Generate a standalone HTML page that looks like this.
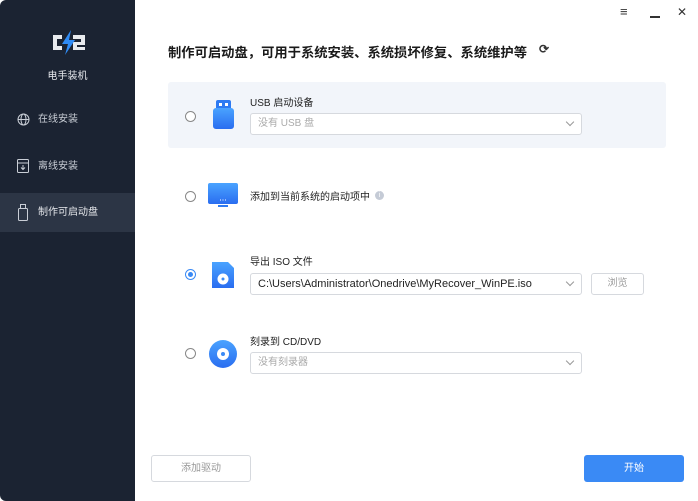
<!DOCTYPE html><html><head><meta charset="utf-8"><style>
*{margin:0;padding:0;box-sizing:border-box}
body{width:698px;height:501px;background:#fff;font-family:"Liberation Sans","Noto Sans CJK SC",sans-serif;position:relative;overflow:hidden;font-size:10px;color:#333}
.a{position:absolute}
.side{left:0;top:0;width:135px;height:501px;background:#1b2332;border-radius:6px 0 0 6px}
.nav{left:0;width:135px;height:39px;color:#c9ced6;font-size:10px;line-height:39px;padding-left:38px}
.radio{width:11px;height:11px;border:1px solid #888;border-radius:50%;background:#fff}
.sel{width:332px;height:22px;border:1px solid #d6d9de;border-radius:3px;background:#fff;padding-left:7px;line-height:20px;color:#aaa;font-size:10px}
.sel:after{content:"";position:absolute;right:8px;top:5px;width:5px;height:5px;border-right:1px solid #999;border-bottom:1px solid #999;transform:rotate(45deg)}
.lbl{font-size:10px;color:#222}
</style></head><body>
<div class="a side"></div>
<svg class="a" style="left:51px;top:30px" width="36" height="25" viewBox="0 0 36 25"><path d="M2 5h9v4H6v7h5v4H2z M22 5h12v10H26v2h8v3H22v-8h8V9h-8z" fill="#e8eaee"/><path d="M20 0L11 14h6l-3 11 10-15h-6z" fill="#2f8bf5"/></svg>
<div class="a" style="left:0;width:135px;top:67px;text-align:center;color:#e6e8ec;font-size:10px">电手装机</div>
<div class="a nav" style="top:100px">在线安装</div>
<svg class="a" style="left:17px;top:113px" width="13" height="13" viewBox="0 0 13 13" fill="none" stroke="#c9ced6"><circle cx="6.5" cy="6.5" r="5.5"/><ellipse cx="6.5" cy="6.5" rx="2.5" ry="5.5"/><path d="M1 6.5h11"/></svg>
<div class="a nav" style="top:147px">离线安装</div>
<svg class="a" style="left:17px;top:159px" width="12" height="14" viewBox="0 0 12 14" fill="none" stroke="#c9ced6"><rect x=".5" y=".5" width="11" height="13" rx="1"/><path d="M.5 4h11M6 6v4M4 8.5l2 2 2-2"/></svg>
<div class="a nav" style="top:193px;background:#2c3545;color:#e6e8ec">制作可启动盘</div>
<svg class="a" style="left:18px;top:204px" width="10" height="17" viewBox="0 0 10 17" fill="none" stroke="#c9ced6"><rect x="2.5" y=".5" width="5" height="4"/><rect x=".5" y="4.5" width="9" height="12" rx="1"/></svg>
<div class="a" style="left:620px;top:4px;font-size:13px;color:#333">≡</div>
<div class="a" style="left:650px;top:16px;width:10px;height:1.5px;background:#333"></div>
<div class="a" style="left:677px;top:5px;font-size:12px;color:#333">✕</div>
<div class="a" style="left:168px;top:42px;font-size:13.3px;font-weight:bold;color:#1a1a1a;white-space:nowrap">制作可启动盘，可用于系统安装、系统损坏修复、系统维护等</div>
<div class="a" style="left:539px;top:42px;font-size:12px;font-weight:bold">⟳</div>
<div class="a" style="left:168px;top:82px;width:498px;height:66px;background:#f2f5fa;border-radius:3px"></div>
<div class="a radio" style="left:185px;top:111px"></div>
<svg class="a" style="left:211px;top:100px" width="25" height="30" viewBox="0 0 25 30"><defs><linearGradient id="g" x1="0" y1="0" x2="0" y2="1"><stop offset="0" stop-color="#4aa3ff"/><stop offset="1" stop-color="#2a6df0"/></linearGradient></defs><rect x="5" y="0" width="15" height="10" rx="2" fill="#2e7af2"/><rect x="8" y="3" width="3" height="3" fill="#fff"/><rect x="14" y="3" width="3" height="3" fill="#fff"/><rect x="2" y="8" width="21" height="21" rx="3" fill="url(#g)"/></svg>
<div class="a lbl" style="left:250px;top:94px">USB 启动设备</div>
<div class="a sel" style="left:250px;top:113px">没有 USB 盘</div>
<div class="a radio" style="left:185px;top:191px"></div>
<svg class="a" style="left:208px;top:183px" width="30" height="26" viewBox="0 0 30 26"><rect x="0" y="0" width="30" height="21" rx="2" fill="url(#g)"/><rect x="10" y="22" width="10" height="2" fill="#2e7af2"/><path d="M12 17h1M14.5 17h1M17 17h1" stroke="#fff"/></svg>
<div class="a lbl" style="left:250px;top:188px">添加到当前系统的启动项中</div>
<div class="a" style="left:375px;top:191px;width:9px;height:9px;border-radius:50%;background:#c5cbd6;color:#fff;font-size:7px;text-align:center;line-height:9px">i</div>
<div class="a radio" style="left:185px;top:269px;border-color:#3a8af5"></div>
<div class="a" style="left:188px;top:272px;width:5px;height:5px;border-radius:50%;background:#3a8af5"></div>
<svg class="a" style="left:210px;top:260px" width="26" height="30" viewBox="0 0 26 30"><path d="M2 2h16l6 6v20H2z" fill="url(#g)"/><circle cx="13" cy="19" r="5.5" fill="#fff"/><circle cx="13" cy="19" r="1.5" fill="#3a8af5"/></svg>
<div class="a lbl" style="left:250px;top:253px">导出 ISO 文件</div>
<div class="a sel" style="left:250px;top:273px;color:#222;font-size:11px">C:\Users\Administrator\Onedrive\MyRecover_WinPE.iso</div>
<div class="a" style="left:591px;top:273px;width:53px;height:22px;border:1px solid #d6d9de;border-radius:3px;text-align:center;line-height:20px;color:#999">浏览</div>
<div class="a radio" style="left:185px;top:348px"></div>
<svg class="a" style="left:208px;top:339px" width="30" height="30" viewBox="0 0 30 30"><circle cx="15" cy="15" r="14" fill="url(#g)"/><circle cx="15" cy="15" r="6" fill="#fff"/><circle cx="15" cy="15" r="2" fill="#3a8af5"/></svg>
<div class="a lbl" style="left:250px;top:333px">刻录到 CD/DVD</div>
<div class="a sel" style="left:250px;top:352px">没有刻录器</div>
<div class="a" style="left:151px;top:455px;width:100px;height:27px;border:1px solid #d6d9de;border-radius:3px;text-align:center;line-height:25px;color:#999">添加驱动</div>
<div class="a" style="left:584px;top:455px;width:100px;height:27px;background:#3a8af5;border-radius:3px;text-align:center;line-height:27px;color:#fff">开始</div>
</body></html>
